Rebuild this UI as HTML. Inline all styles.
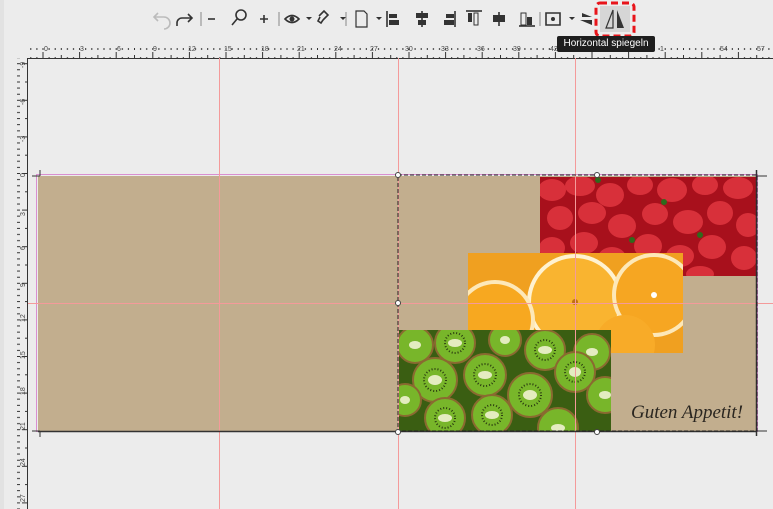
<!DOCTYPE html>
<html><head><meta charset="utf-8"><style>
html,body{margin:0;padding:0;width:773px;height:509px;overflow:hidden;background:#ececec;font-family:"Liberation Sans",sans-serif}
svg{position:absolute;left:0;top:0}
.tip{position:absolute;left:557px;top:36px;width:98px;height:16px;background:#1e1e1e;color:#fff;font-size:10px;line-height:16px;text-align:center;border-radius:2px}
</style></head><body>
<svg width="773" height="509" viewBox="0 0 773 509" xmlns="http://www.w3.org/2000/svg">
<defs>
<pattern id="tt" x="42.5" y="0" width="36.6" height="10" patternUnits="userSpaceOnUse">
<path d="M0.5 2V10M6.6 7V10M12.7 7V10M18.8 5V10M24.9 7V10M31 7V10" stroke="#333" stroke-width="1"/>
</pattern>
<pattern id="lt" x="0" y="173" width="10" height="36.6" patternUnits="userSpaceOnUse">
<path d="M2 0.5H10M7 6.6H10M7 12.7H10M5 18.8H10M7 24.9H10M7 31H10" stroke="#333" stroke-width="1"/>
</pattern>
<clipPath id="cs"><rect x="540" y="177" width="216" height="99"/></clipPath>
<clipPath id="co"><rect x="468" y="253" width="215" height="100"/></clipPath>
<clipPath id="ck"><rect x="398" y="330" width="213" height="101"/></clipPath>
</defs>
<rect x="0" y="0" width="4" height="509" fill="#e2e2e2"/>
<!-- toolbar -->
<g fill="none" stroke="#333" stroke-width="1.6">
<path d="M154 17h10a6 6 0 0 1 0 12" stroke="#bbb"/><path d="M158 13l-4 4 4 4" stroke="#bbb"/>
<path d="M192 18h-10a5 5 0 0 0 -5 5v3M188 14l4 4-4 4"/>
<path d="M201 12v14" stroke="#888" stroke-width="1"/>
<path d="M208 19h7"/>
<circle cx="241" cy="15" r="5"/><path d="M237 19l-5 6"/>
<path d="M260 19h8M264 15v8"/>
<path d="M279 12v14" stroke="#888" stroke-width="1"/>
<path d="M285 19q7-7 14 0q-7 7-14 0z"/>
<path d="M319 16l5-5 4 4-5 5M320 17l-2 4 3 2 2-3"/>
<path d="M346 12v14" stroke="#888" stroke-width="1"/>
<path d="M356 11h8l3 3v13h-11z" stroke-width="1.2"/>
<path d="M387 11v16"/>
<path d="M422 11v16"/>
<path d="M455 11v16"/>
<path d="M466 11h16"/>
<path d="M499 12v14"/>
<path d="M519 26h16"/>
<path d="M540 12v14" stroke="#888" stroke-width="1"/>
<path d="M546 13h14v12h-14z"/>
</g>
<g fill="#333">
<circle cx="292" cy="19" r="2.5"/>
<path d="M306 17h6l-3 3z M340 17h6l-3 3z M376 17h6l-3 3z M569 17h6l-3 3z"/>
<rect x="389" y="14" width="8" height="4"/><rect x="389" y="20" width="10" height="5"/>
<rect x="416" y="13" width="12" height="5"/><rect x="418" y="20" width="8" height="5"/>
<rect x="446" y="14" width="8" height="4"/><rect x="444" y="20" width="10" height="5"/>
<rect x="468" y="13" width="4" height="9"/><rect x="474" y="13" width="4" height="12" fill="none" stroke="#333"/>
<rect x="493" y="15" width="12" height="7"/>
<rect x="521" y="13" width="5" height="12" fill="none" stroke="#333"/><rect x="527" y="17" width="5" height="8"/>
<circle cx="553" cy="19" r="2"/>
<path d="M582 13l10 4-10 0z M580 20h12v5z"/>
</g>
<rect x="600" y="6" width="30" height="26" fill="#d6d6d6"/>
<path d="M613 10v18h-7z" fill="none" stroke="#333" stroke-width="1.2"/>
<path d="M617 10v18h7z" fill="#333"/>
<rect x="596" y="3" width="38" height="33" rx="4" fill="none" stroke="#e8141a" stroke-width="3" stroke-dasharray="7 4"/>
<!-- rulers -->
<rect x="27" y="48" width="746" height="10" fill="url(#tt)"/>
<line x1="27" y1="58.5" x2="773" y2="58.5" stroke="#333"/>
<rect x="17" y="58" width="10" height="451" fill="url(#lt)"/>
<line x1="27.5" y1="58" x2="27.5" y2="509" stroke="#333"/>
<g font-size="7" fill="#444">
<text x="44" y="51">0</text><text x="80" y="51">3</text><text x="117" y="51">6</text><text x="153" y="51">9</text><text x="188" y="51">12</text><text x="224" y="51">15</text><text x="261" y="51">18</text><text x="297" y="51">21</text><text x="334" y="51">24</text><text x="370" y="51">27</text><text x="405" y="51">30</text><text x="441" y="51">33</text><text x="477" y="51">36</text><text x="513" y="51">39</text><text x="550" y="51">42</text><text x="660" y="51">1</text><text x="720" y="51">54</text><text x="757" y="51">57</text>
</g>
<g font-size="7" fill="#444">
<text transform="translate(25,68) rotate(-90)">-9</text>
<text transform="translate(25,105) rotate(-90)">-6</text>
<text transform="translate(25,142) rotate(-90)">-3</text>
<text transform="translate(25,177) rotate(-90)">0</text>
<text transform="translate(25,216) rotate(-90)">3</text>
<text transform="translate(25,250) rotate(-90)">6</text>
<text transform="translate(25,287) rotate(-90)">9</text>
<text transform="translate(25,322) rotate(-90)">12</text>
<text transform="translate(25,359) rotate(-90)">15</text>
<text transform="translate(25,395) rotate(-90)">18</text>
<text transform="translate(25,430) rotate(-90)">21</text>
<text transform="translate(25,466) rotate(-90)">24</text>
<text transform="translate(25,502) rotate(-90)">27</text>
</g>
<!-- card -->
<rect x="36.5" y="174.5" width="721" height="257" fill="none" stroke="#d98fd0"/>
<rect x="38" y="176" width="719" height="255" fill="#c2ae8e"/>
<!-- strawberries -->
<g clip-path="url(#cs)">
<rect x="540" y="177" width="216" height="99" fill="#a8101c"/>
<g fill="#d8303a">
<ellipse cx="552" cy="190" rx="14" ry="11"/><ellipse cx="580" cy="186" rx="15" ry="10"/><ellipse cx="610" cy="195" rx="14" ry="12"/><ellipse cx="640" cy="185" rx="13" ry="10"/><ellipse cx="672" cy="190" rx="15" ry="12"/><ellipse cx="705" cy="185" rx="13" ry="10"/><ellipse cx="738" cy="188" rx="15" ry="11"/>
<ellipse cx="560" cy="218" rx="13" ry="12"/><ellipse cx="592" cy="213" rx="14" ry="11"/><ellipse cx="622" cy="226" rx="14" ry="12"/><ellipse cx="655" cy="214" rx="13" ry="11"/><ellipse cx="688" cy="222" rx="15" ry="12"/><ellipse cx="720" cy="213" rx="13" ry="12"/><ellipse cx="748" cy="225" rx="12" ry="12"/>
<ellipse cx="552" cy="248" rx="13" ry="11"/><ellipse cx="584" cy="243" rx="14" ry="11"/><ellipse cx="612" cy="258" rx="14" ry="11"/><ellipse cx="648" cy="246" rx="14" ry="12"/><ellipse cx="680" cy="256" rx="14" ry="11"/><ellipse cx="712" cy="247" rx="14" ry="12"/><ellipse cx="744" cy="258" rx="13" ry="12"/>
<ellipse cx="570" cy="272" rx="14" ry="8"/><ellipse cx="632" cy="275" rx="14" ry="8"/><ellipse cx="700" cy="274" rx="14" ry="8"/>
</g>
<g fill="#2f6a1c"><circle cx="598" cy="180" r="3"/><circle cx="664" cy="202" r="3"/><circle cx="700" cy="235" r="3"/><circle cx="632" cy="240" r="3"/></g>
</g>
<!-- oranges -->
<g clip-path="url(#co)">
<rect x="468" y="253" width="215" height="100" fill="#f0a020"/>
<circle cx="575" cy="302" r="48" fill="#fff2d0"/><circle cx="575" cy="302" r="44" fill="#f9b430"/>
<circle cx="495" cy="320" r="40" fill="#fde8b8"/><circle cx="495" cy="320" r="36" fill="#f7a820"/>
<circle cx="654" cy="295" r="42" fill="#fde8b8"/><circle cx="654" cy="295" r="38" fill="#f6a622"/>
<circle cx="625" cy="345" r="30" fill="#f8ab28"/>
<circle cx="575" cy="302" r="3" fill="#c07010"/><circle cx="654" cy="295" r="3" fill="#fff"/>
</g>
<!-- kiwis -->
<g clip-path="url(#ck)">
<rect x="398" y="330" width="213" height="101" fill="#3a5e12"/>
<g fill="#78b62a" stroke="#8a6a30" stroke-width="2">
<circle cx="415" cy="345" r="18"/><circle cx="455" cy="343" r="20"/><circle cx="505" cy="340" r="16"/><circle cx="545" cy="350" r="20"/><circle cx="592" cy="352" r="18"/>
<circle cx="435" cy="380" r="22"/><circle cx="485" cy="375" r="21"/><circle cx="530" cy="395" r="22"/><circle cx="575" cy="372" r="20"/><circle cx="605" cy="395" r="18"/>
<circle cx="405" cy="400" r="16"/><circle cx="445" cy="418" r="20"/><circle cx="492" cy="415" r="20"/><circle cx="558" cy="428" r="20"/>
</g>
<g fill="none" stroke="#2a3a10" stroke-width="2" stroke-dasharray="1 2">
<circle cx="455" cy="343" r="10"/><circle cx="545" cy="350" r="10"/><circle cx="435" cy="380" r="11"/><circle cx="485" cy="375" r="11"/><circle cx="530" cy="395" r="11"/><circle cx="575" cy="372" r="10"/><circle cx="445" cy="418" r="10"/><circle cx="492" cy="415" r="10"/>
</g>
<g fill="#e4ecc0">
<ellipse cx="415" cy="345" rx="6" ry="4"/><ellipse cx="455" cy="343" rx="7" ry="4"/><ellipse cx="505" cy="340" rx="5" ry="4"/><ellipse cx="545" cy="350" rx="7" ry="4"/><ellipse cx="592" cy="352" rx="6" ry="4"/>
<ellipse cx="435" cy="380" rx="7" ry="5"/><ellipse cx="485" cy="375" rx="7" ry="4"/><ellipse cx="530" cy="395" rx="7" ry="5"/><ellipse cx="575" cy="372" rx="6" ry="5"/><ellipse cx="605" cy="395" rx="6" ry="4"/>
<ellipse cx="405" cy="400" rx="5" ry="4"/><ellipse cx="445" cy="418" rx="7" ry="4"/><ellipse cx="492" cy="415" rx="7" ry="4"/><ellipse cx="558" cy="428" rx="7" ry="4"/>
</g>
</g>
<text x="631" y="418" font-family="Liberation Serif,serif" font-style="italic" font-size="19" fill="#2a2620">Guten Appetit!</text>
<!-- guides -->
<g stroke="#f49a9a" stroke-width="1">
<line x1="219.5" y1="58" x2="219.5" y2="509"/><line x1="398.5" y1="58" x2="398.5" y2="509"/><line x1="575.5" y1="58" x2="575.5" y2="509"/>
<line x1="28" y1="303.5" x2="773" y2="303.5"/>
</g>
<!-- card edges -->
<line x1="38" y1="431.5" x2="757" y2="431.5" stroke="#333" stroke-width="1.5"/>
<line x1="756.5" y1="170" x2="756.5" y2="436" stroke="#333" stroke-width="1.5"/>
<path d="M32 176h8M40 170v6M32 431h8M40 431v6M757 176h10M757 431h10" stroke="#333"/>
<!-- selection -->
<rect x="398" y="175" width="359" height="256" fill="none" stroke="#222" stroke-dasharray="4 2"/>
<g fill="#fff" stroke="#444"><circle cx="398" cy="175" r="2.5"/><circle cx="597" cy="175" r="2.5"/><circle cx="398" cy="303" r="2.5"/><circle cx="398" cy="432" r="2.5"/><circle cx="597" cy="432" r="2.5"/></g>
</svg>
<div class="tip">Horizontal spiegeln</div>
</body></html>
